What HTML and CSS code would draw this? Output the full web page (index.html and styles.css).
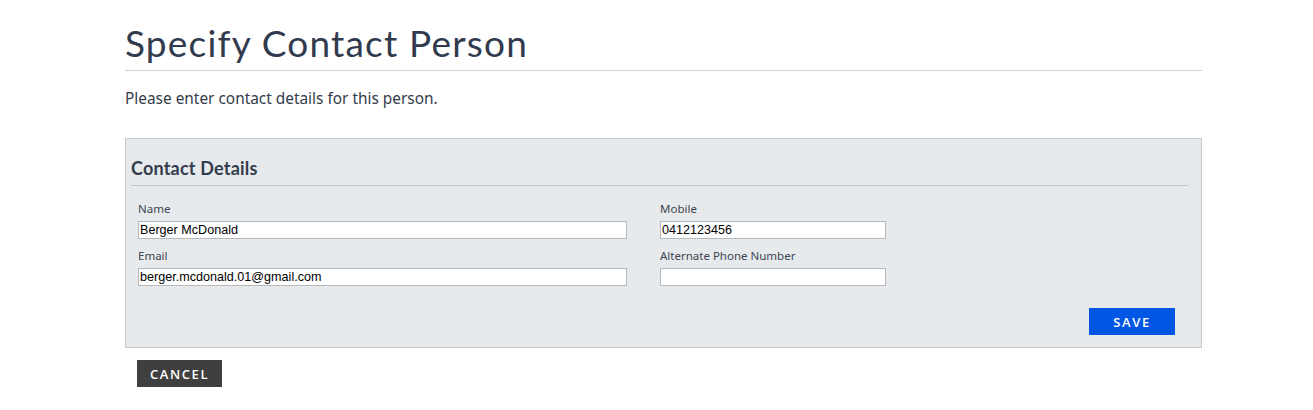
FILE: index.html
```html
<!DOCTYPE html>
<html lang="en">
  <head>
    <meta charset="UTF-8" />
    <title>Specify Contact Person</title>
    <link rel="stylesheet" href="styles.css">
  </head>
  <body>
    <div class="page">
      <h1 class="page-title">Specify Contact Person</h1>
      <p class="intro">Please enter contact details for this person.</p>

      <form class="panel">
        <h2 class="panel-title">Contact Details</h2>
        <div class="fields">
          <div class="col col-left">
            <div class="field">
              <label for="name">Name</label>
              <input type="text" id="name" value="Berger McDonald" />
            </div>
            <div class="field">
              <label for="email">Email</label>
              <input type="text" id="email" value="berger.mcdonald.01@gmail.com" />
            </div>
          </div>
          <div class="col col-right">
            <div class="field">
              <label for="mobile">Mobile</label>
              <input type="text" id="mobile" value="0412123456" />
            </div>
            <div class="field">
              <label for="alt">Alternate Phone Number</label>
              <input type="text" id="alt" value="" />
            </div>
          </div>
        </div>
        <div class="actions">
          <button type="submit" class="btn btn-save">SAVE</button>
        </div>
      </form>

      <button type="button" class="btn btn-cancel">CANCEL</button>
    </div>
  </body>
</html>
```

FILE: styles.css
```css
body {
  margin: 0;
  background: #fff;
  font-family: "Open Sans", sans-serif;
  color: #333;
}

.page {
  width: 1077px;
  margin-left: 125px;
  padding-top: 22px;
}

.page-title {
  margin: 0;
  padding-bottom: 6px;
  font-family: "Lato", sans-serif;
  font-weight: 400;
  font-size: 37px;
  line-height: 42px;
  letter-spacing: 1.2px;
  color: #323b4e;
  border-bottom: 1px solid #cfd1d6;
}

.intro {
  margin: 17px 0 28px;
  font-family: "Noto Sans", sans-serif;
  font-size: 15.4px;
  line-height: 22px;
  color: #333b4a;
}

.panel {
  background: #e6eaed;
  border: 1px solid #c6c9cc;
  padding: 18px 13px 12px 5px;
}

.panel-title {
  margin: 0;
  padding-bottom: 6px;
  font-family: "Lato", sans-serif;
  font-size: 18px;
  font-weight: 700;
  line-height: 22px;
  letter-spacing: 0.2px;
  color: #343c4e;
  border-bottom: 1px solid #c3c6c9;
}

.fields {
  display: flex;
  gap: 33px;
  padding: 15px 0 0 7px;
}

.col-left {
  width: 489px;
}

.col-right {
  width: 226px;
}

.field {
  margin-bottom: 9px;
}

label {
  display: block;
  margin-bottom: 4px;
  font-family: "Noto Sans", sans-serif;
  font-size: 11.5px;
  line-height: 16px;
  color: #3f4552;
}

input[type="text"] {
  display: block;
  width: 100%;
  height: 18px;
  box-sizing: border-box;
  padding: 0 1px;
  border: 1px solid #b7b9bc;
  background: #fff;
  font-family: "Liberation Sans", sans-serif;
  font-size: 12.6px;
  color: #000;
}

.actions {
  display: flex;
  justify-content: flex-end;
  padding: 13px 13px 0 0;
}

.btn {
  border: none;
  height: 27px;
  font-family: "Open Sans", sans-serif;
  font-size: 13px;
  font-weight: 600;
  letter-spacing: 1.6px;
  color: #fff;
  cursor: pointer;
}

.btn-save {
  width: 86px;
  background: #0157e4;
}

.btn-cancel {
  width: 85px;
  margin: 12px 0 0 12px;
  background: #3f3f3f;
}
```
